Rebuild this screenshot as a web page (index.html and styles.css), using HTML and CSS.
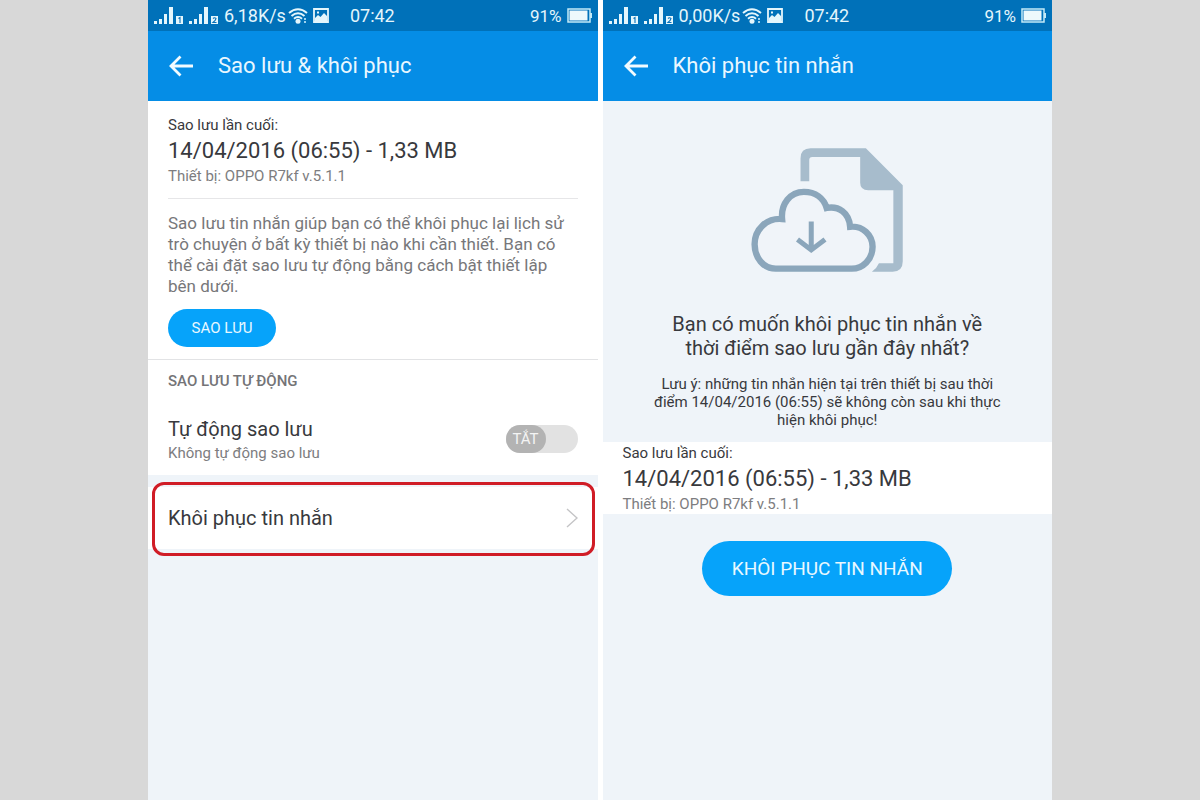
FILE: index.html
```html
<!DOCTYPE html>
<html lang="vi">
<head>
<meta charset="utf-8">
<meta name="viewport" content="width=device-width, initial-scale=1">
<title>Sao lưu &amp; khôi phục</title>
<link rel="stylesheet" href="styles.css">
</head>
<body>
<svg class="defs" aria-hidden="true">
  <symbol id="signal" viewBox="0 0 66 18">
    <path d="M0 14h3v3H0zM5 12h3v5H5zM10 7h3v10h-3zM15 0h4v17h-4zM22 9h7v8h-7zM35 14h3v3h-3zM40 12h3v5h-3zM45 7h3v10h-3zM50 0h4v17h-4zM57 9h7v8h-7z" fill="#e4f6fc"/>
    <path d="M24.500 11.500l1.500-1v5.500M59 11.500q1.500-1.500 3 0q0 1.500-3 4h3.500" fill="none" stroke="#0871ba" stroke-width="1.100"/>
  </symbol>
  <symbol id="wifi" viewBox="0 0 20 16">
    <path d="M1 5Q10-2.500 19 5M3.500 8Q10 2.500 16.500 8M6 10.700Q10 7.300 14 10.700" fill="none" stroke="#e4f6fc" stroke-width="2"/>
    <circle cx="10" cy="13.300" r="2.500" fill="#e4f6fc"/>
    <path d="M16 10h2v2h-2zM16 13h2v2h-2z" fill="#9fd3ee"/>
  </symbol>
  <symbol id="photo" viewBox="0 0 16 15">
    <path d="M1 1h14v13H1z" fill="none" stroke="#e4f6fc" stroke-width="1.800"/>
    <path d="M2 13V10l3-3 2.500 2L11 5l3 3v5zM4 3.500h2v2H4z" fill="#e4f6fc"/>
  </symbol>
  <symbol id="battery" viewBox="0 0 26 15">
    <path d="M1 1h22v13H1z" fill="none" stroke="#c4eaf7" stroke-width="1.500"/>
    <path d="M2.500 2.500h18v10h-18z" fill="#edf9fc"/>
    <path d="M23 5h2v5h-2z" fill="#c4eaf7"/>
  </symbol>
  <symbol id="back" viewBox="0 0 26 24">
    <path d="M25 12H3M12.500 2.500L3 12l9.500 9.500" fill="none" stroke="#f2fbff" stroke-width="2.800"/>
  </symbol>
</svg>

<div class="stage">
  <main class="phone">
    <div class="status">
      <svg class="signal"><use href="#signal"/></svg>
      <span class="speed">6,18K/s</span>
      <svg class="wifi"><use href="#wifi"/></svg>
      <svg class="photo"><use href="#photo"/></svg>
      <time class="clock">07:42</time>
      <span class="charge">91%</span>
      <svg class="battery"><use href="#battery"/></svg>
    </div>
    <header class="appbar">
      <button class="back" type="button" aria-label="Quay lại"><svg><use href="#back"/></svg></button>
      <h1 class="title">Sao lưu &amp; khôi phục</h1>
    </header>
    <section class="panel">
      <div class="backup backup-first">
        <p class="label">Sao lưu lần cuối:</p>
        <p class="date">14/04/2016 (06:55) - 1,33 MB</p>
        <p class="device">Thiết bị: OPPO R7kf v.5.1.1</p>
      </div>
      <div class="about">
        <p class="intro">Sao lưu tin nhắn giúp bạn có thể khôi phục lại lịch sử trò chuyện ở bất kỳ thiết bị nào khi cần thiết. Bạn có thể cài đặt sao lưu tự động bằng cách bật thiết lập bên dưới.</p>
        <button class="pill" type="button">SAO LƯU</button>
      </div>
    </section>
    <section class="panel auto">
      <h2 class="heading">SAO LƯU TỰ ĐỘNG</h2>
      <div class="setting">
        <div>
          <label class="name" for="auto">Tự động sao lưu</label>
          <p class="device" id="auto-note">Không tự động sao lưu</p>
        </div>
        <span class="switch">
          <input class="switch-input" type="checkbox" role="switch" id="auto" aria-describedby="auto-note">
          <span class="knob" aria-hidden="true">TẮT</span>
        </span>
      </div>
    </section>
    <a class="restore" href="#restore">
      <span class="name">Khôi phục tin nhắn</span>
      <svg class="chevron" viewBox="0 0 12 20"><path d="M1 1l10 9-10 9" fill="none" stroke="#c4c4c6" stroke-width="1.400"/></svg>
    </a>
  </main>

  <section class="phone" id="restore">
    <div class="status">
      <svg class="signal"><use href="#signal"/></svg>
      <span class="speed">0,00K/s</span>
      <svg class="wifi"><use href="#wifi"/></svg>
      <svg class="photo"><use href="#photo"/></svg>
      <time class="clock">07:42</time>
      <span class="charge">91%</span>
      <svg class="battery"><use href="#battery"/></svg>
    </div>
    <header class="appbar">
      <button class="back" type="button" aria-label="Quay lại"><svg><use href="#back"/></svg></button>
      <h2 class="title">Khôi phục tin nhắn</h2>
    </header>
    <div class="confirm">
      <svg class="art" viewBox="36 40 452 370" aria-hidden="true">
        <path d="M183 139V71Q183 41 213 41H378L488 151V379Q488 409 458 409H396Q410 400 417 384H460V166H385Q361 166 361 144V67H218Q209 67 209 76V139Z" fill="#a7bccc"/>
        <path d="M109 400C73 400 46 368 46 327C46 283 82 248 128 252C124 207 152 171 193 171C228 171 252 190 261 219C297 212 328 234 331 275C368 271 398 299 398 335C398 372 369 400 336 400Z" fill="#f0f4f9" stroke="#8ba6bb" stroke-width="19"/>
        <path d="M215 259V342M174 313L215 344L256 313" fill="none" stroke="#8ba6bb" stroke-width="15"/>
      </svg>
      <p class="question">Bạn có muốn khôi phục tin nhắn về thời điểm sao lưu gần đây nhất?</p>
      <p class="note">Lưu ý: những tin nhắn hiện tại trên thiết bị sau thời điểm 14/04/2016 (06:55) sẽ không còn sau khi thực hiện khôi phục!</p>
    </div>
    <div class="panel backup backup-latest">
      <p class="label">Sao lưu lần cuối:</p>
      <p class="date">14/04/2016 (06:55) - 1,33 MB</p>
      <p class="device">Thiết bị: OPPO R7kf v.5.1.1</p>
    </div>
    <button class="pill pill-large" type="button">KHÔI PHỤC TIN NHẮN</button>
  </section>
</div>
</body>
</html>
```

FILE: styles.css
```css
* { box-sizing: border-box; }
body {
  margin: 0;
  background: #d8d8d8;
  color: #38393d;
  font-family: Roboto, "Noto Sans", sans-serif;
}
h1, h2, p { margin: 0; font-weight: 400; }
button { border: 0; padding: 0; font: inherit; cursor: pointer; }
svg { display: block; flex: none; }
.defs { position: absolute; width: 0; height: 0; }

.stage {
  display: grid;
  grid-template-columns: repeat(auto-fit, minmax(400px, 1fr));
  gap: 5px;
  max-width: 904px;
  min-height: 100vh;
  margin: 0 auto;
  background: #fff;
}
.phone {
  display: flex;
  flex-direction: column;
  background: #eff4f9;
}

.status {
  display: flex;
  align-items: center;
  height: 31px;
  padding: 0 5px 0 6px;
  background: #0071b9;
  color: #e4f6fc;
  font-size: 18px;
}
.signal { width: 66px; height: 18px; }
.speed { margin: 0 2px 0 4px; }
.wifi { width: 20px; height: 16px; }
.photo { width: 16px; height: 15px; margin-left: 5px; }
.clock { margin-left: 21px; }
.charge { margin-left: auto; font-size: 17px; }
.battery { width: 26px; height: 15px; margin-left: 5px; }

.appbar {
  display: flex;
  align-items: center;
  gap: 24px;
  height: 70px;
  padding: 0 20px;
  background: #058de6;
  color: #e9f7ff;
}
.back { background: none; }
.back svg { width: 26px; height: 24px; }
.title { font-size: 22px; line-height: 28px; }

.panel { background: #fff; padding: 0 20px; }
.label { font-size: 15px; line-height: 21px; }
.date { font-size: 22px; line-height: 30px; }
.device { color: #7d7d80; font-size: 15px; line-height: 20px; }
.backup-first {
  padding: 14px 0 12px;
  border-bottom: 1px solid #e6e6e8;
}
.backup-latest { padding-top: 1px; }
.about { padding: 14px 0 12px; }
.intro {
  margin-bottom: 12px;
  color: #77777a;
  font-size: 17px;
  line-height: 21px;
}
.pill {
  width: 108px;
  height: 38px;
  border-radius: 28px;
  background: #06a3fa;
  color: #e9f8ff;
  font-size: 15px;
}

.auto { border-top: 1px solid #e2e3e5; padding-bottom: 12px; }
.heading {
  padding: 11px 0 24px;
  color: #747477;
  font-size: 15px;
  font-weight: 500;
  line-height: 20px;
}
.setting {
  display: flex;
  align-items: center;
  justify-content: space-between;
}
.name { font-size: 20px; line-height: 28px; }
.switch { position: relative; width: 72px; height: 28px; }
.switch-input {
  appearance: none;
  width: 100%;
  height: 100%;
  margin: 0;
  border-radius: 14px;
  background: #e2e2e2;
  cursor: pointer;
}
.knob {
  position: absolute;
  top: 0;
  left: 0;
  width: 40px;
  border-radius: 14px;
  background: #b3b3b3;
  color: #f4f4f4;
  font-size: 15px;
  line-height: 28px;
  text-align: center;
  pointer-events: none;
}

.restore {
  position: relative;
  display: flex;
  align-items: center;
  justify-content: space-between;
  height: 62px;
  margin-top: 12px;
  padding: 0 20px;
  background: #fff;
  color: inherit;
  text-decoration: none;
}
.restore::after {
  content: "";
  position: absolute;
  inset: -5px 3px -7px 4px;
  border: 3px solid #d01c26;
  border-radius: 12px;
}
.chevron { width: 12px; height: 20px; }

.confirm {
  display: flex;
  flex-direction: column;
  align-items: center;
  padding: 47px 50px 13px;
  text-align: center;
}
.art { width: 152px; height: 124px; }
.question {
  max-width: 330px;
  margin: 40px 0 15px;
  font-size: 20px;
  line-height: 24px;
}
.note { font-size: 15px; line-height: 18px; }
.pill-large {
  align-self: center;
  width: 250px;
  height: 55px;
  margin-top: 27px;
  font-size: 19px;
}
```
